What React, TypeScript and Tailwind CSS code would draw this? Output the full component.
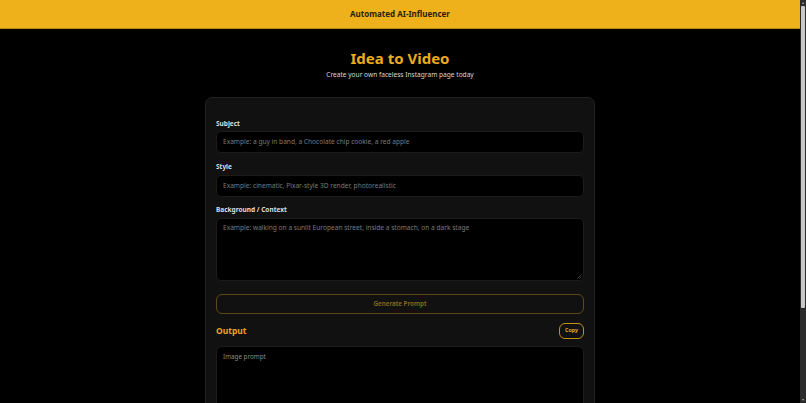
import React from "react";

export default function App() {
  return (
    <div className="min-h-screen bg-black font-['Noto_Sans',sans-serif]">
      <div className="w-[800px] bg-black min-h-[520px]">
        <header className="h-[29px] bg-[#eeb11c] border-b border-[#b58514] flex items-center justify-center">
          <span className="text-[8px] font-bold text-[#2b2206]">Automated AI-Influencer</span>
        </header>
        <div className="flex flex-col items-center pt-[18px]">
          <h1 className="text-[15px] leading-[22px] font-bold text-[#eaab1f]">Idea to Video</h1>
          <p className="text-[6.6px] leading-[10px] mt-[1px] text-[#d8d8d8]">Create your own faceless Instagram page today</p>
          <div className="mt-[17px] w-[390px] bg-[#111111] border border-[#222222] rounded-[7px] px-[10px] pt-[21px] pb-[20px] flex flex-col">
            <label className="text-[6.5px] leading-[10px] font-bold text-[#dddddd] mb-[2px]">Subject</label>
            <div className="h-[22px] bg-black border border-[#1c1c1c] rounded-[5px] flex items-center px-[6px]">
              <span className="text-[6.6px] leading-[10px] text-[#7a7a7a]">Example: a guy in band, a Chocolate chip cookie, a red apple</span>
            </div>
            <label className="text-[6.5px] leading-[10px] font-bold text-[#dddddd] mt-[9px] mb-[3px]">Style</label>
            <div className="h-[22px] bg-black border border-[#1c1c1c] rounded-[5px] flex items-center px-[6px]">
              <span className="text-[6.6px] leading-[10px] text-[#7a7a7a]">Example: cinematic, Pixar-style 3D render, photorealistic</span>
            </div>
            <label className="text-[6.5px] leading-[10px] font-bold text-[#dddddd] mt-[8px] mb-[3px]">Background / Context</label>
            <div className="relative h-[63px] bg-black border border-[#1c1c1c] rounded-[5px] px-[6px] pt-[4px]">
              <span className="block text-[6.6px] leading-[10px] text-[#7a7a7a]">Example: walking on a sunlit European street, inside a stomach, on a dark stage</span>
              <svg className="absolute right-[1px] bottom-[1px]" width="5" height="5" viewBox="0 0 5 5">
                <path d="M4.5 0.5 L0.5 4.5 M4.5 2.5 L2.5 4.5" stroke="#555" strokeWidth="0.7" />
              </svg>
            </div>
            <button className="mt-[13px] h-[20px] border border-[#5e4914] rounded-[6px] flex items-center justify-center text-[6.3px] font-semibold text-[#8c6e1e]">Generate Prompt</button>
            <div className="mt-[9px] flex items-center justify-between h-[16px]">
              <span className="text-[8.5px] font-bold text-[#e3a520]">Output</span>
              <button className="h-[16px] px-[5px] border border-[#c28f1b] rounded-[6px] text-[5.3px] font-bold text-[#e6aa22]">Copy</button>
            </div>
            <div className="mt-[7px] h-[110px] bg-black border border-[#1c1c1c] rounded-[6px] px-[6px] pt-[5px]">
              <span className="block text-[6.3px] leading-[10px] text-[#8a8a8a]">Image prompt</span>
            </div>
          </div>
        </div>
      </div>
      <div className="fixed top-0 right-0 w-[6px] h-full bg-[#2b2b2b] flex flex-col items-center">
        <div className="text-[4px] leading-[6px] text-[#aaa]">▴</div>
        <div className="w-[4px] h-[302px] bg-[#c8c8c8] rounded-[1px]" />
        <div className="flex-1" />
        <div className="text-[4px] leading-[6px] text-[#aaa]">▾</div>
      </div>
    </div>
  );
}
